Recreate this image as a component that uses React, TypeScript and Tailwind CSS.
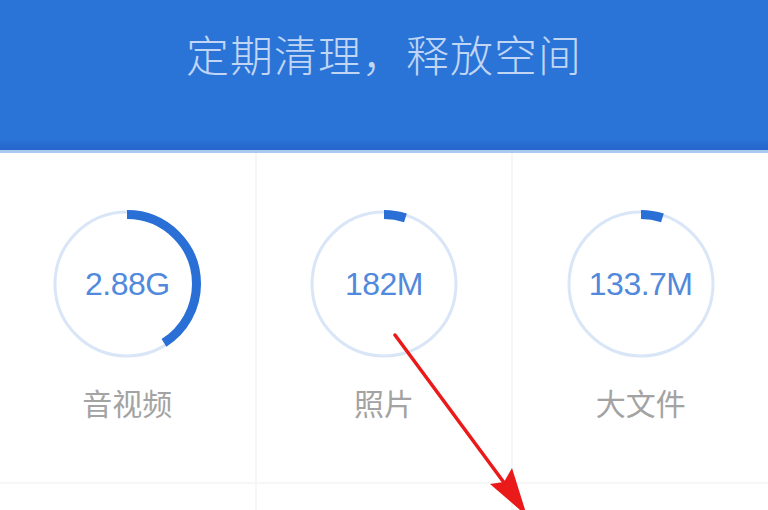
// 存储清理概览：顶部标题 + 三栏环形占用图
const cjk = { fontFamily: '"Noto Sans CJK SC", "Noto Sans", sans-serif' };
const num = { fontFamily: '"Liberation Sans", Arial, sans-serif' };

interface RingProps {
  value: string;
  label: string;
  percent: number;
}

function Ring({ value, label, percent }: RingProps) {
  const r = 69.5;
  const c = 2 * Math.PI * r;
  return (
    <div className="flex flex-col items-center bg-white pt-[56px] h-[329px]">
      <div className="relative w-[150px] h-[150px]">
        <svg width="150" height="150" viewBox="0 0 150 150" className="-rotate-90">
          <circle cx="75" cy="75" r="72" fill="none" stroke="#d9e6f7" strokeWidth="3" />
          <circle
            cx="75"
            cy="75"
            r={r}
            fill="none"
            stroke="#2a6fd6"
            strokeWidth="9"
            strokeDasharray={`${(c * percent) / 100} ${c}`}
          />
        </svg>
        <div
          className="absolute inset-0 flex items-center justify-center text-[32px] text-[#5189dc] tracking-[-0.5px]"
          style={num}
        >
          {value}
        </div>
      </div>
      <div className="mt-[28px] text-[30px] leading-none text-[#a3a3a3]" style={cjk}>
        {label}
      </div>
    </div>
  );
}

export default function App() {
  return (
    <div className="relative w-[768px] h-[510px] overflow-hidden bg-[#f5f6f8]">
      <header className="h-[150px] bg-gradient-to-b from-[#2b74d7] from-[92%] to-[#2565cb] flex justify-center pt-[32px]">
        <h1 className="text-[43px] leading-none font-light text-[#c0d6f4] tracking-[1px]" style={cjk}>
          定期清理，释放空间
        </h1>
      </header>
      <div className="h-[3px] bg-[#a9c9f0]" />

      <div className="grid grid-cols-3 gap-[2px] bg-[#f5f6f8]">
        <Ring value="2.88G" label="音视频" percent={41} />
        <Ring value="182M" label="照片" percent={5} />
        <Ring value="133.7M" label="大文件" percent={5} />
        <div className="h-[40px] bg-white" />
        <div className="h-[40px] bg-white" />
        <div className="h-[40px] bg-white" />
      </div>

      {/* 红色标注箭头 */}
      <svg className="absolute inset-0 pointer-events-none" width="768" height="510" viewBox="0 0 768 510">
        <line x1="395" y1="335" x2="508" y2="488" stroke="#ea1a1a" strokeWidth="3.5" strokeLinecap="round" />
        <polygon points="527,516 490,484 504,482 512,468" fill="#ea1a1a" />
      </svg>
    </div>
  );
}
